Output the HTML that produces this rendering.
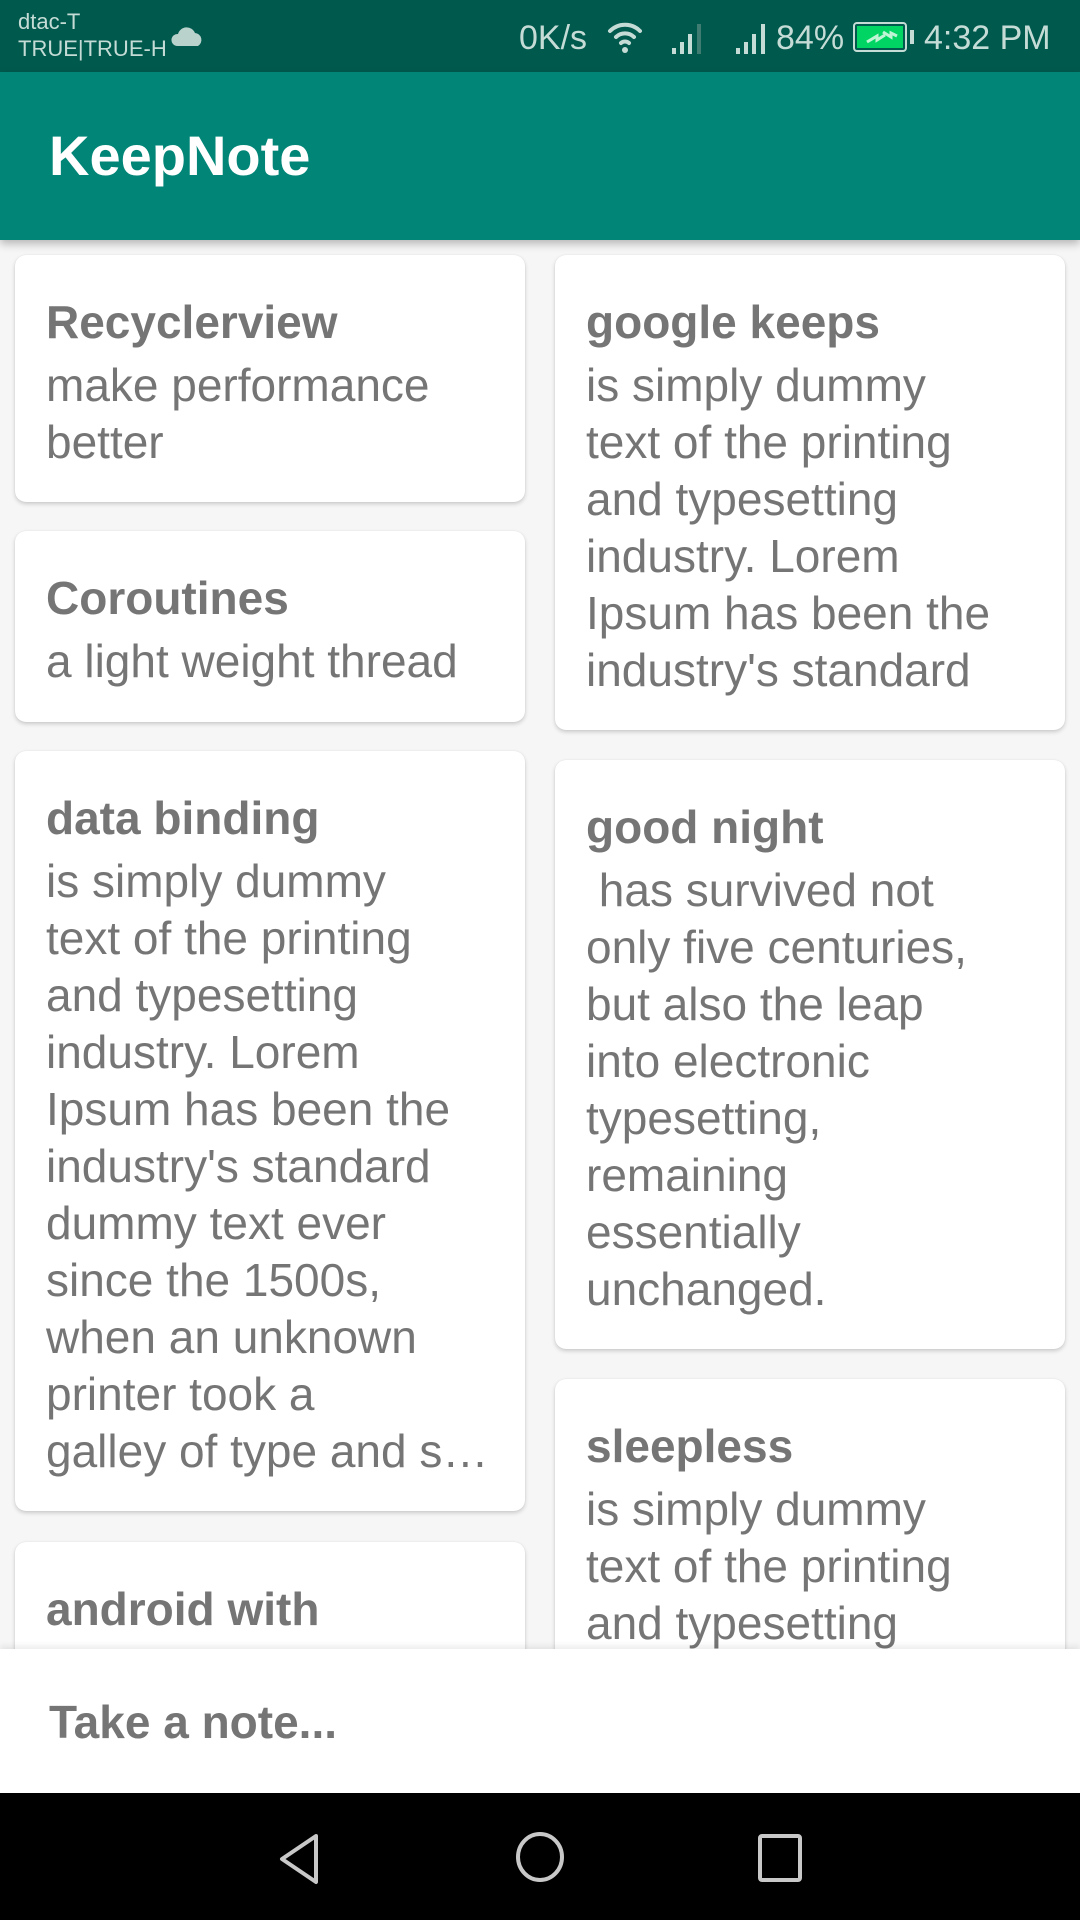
<!DOCTYPE html>
<html><head><meta charset="utf-8"><style>
*{margin:0;padding:0;box-sizing:border-box}
body{width:1080px;height:1920px;overflow:hidden;background:#f6f6f6;font-family:"Liberation Sans",sans-serif;position:relative}
.sb{position:absolute;left:0;top:0;width:1080px;height:72px;background:#00594d;color:#c5dcd6}
.ab{position:absolute;left:0;top:72px;width:1080px;height:168px;background:#008577;box-shadow:0 4px 8px rgba(0,0,0,.25);z-index:2}
.ab span{position:absolute;left:49px;top:54px;font-size:56px;font-weight:bold;color:#fff;line-height:60px}
.card{position:absolute;background:#fff;border-radius:11px;box-shadow:0 2px 4px rgba(0,0,0,.18),0 0 1px rgba(0,0,0,.1);padding:37px 0 0 31px;color:#757575;overflow:hidden;white-space:nowrap}
.t{font-size:46px;font-weight:bold;line-height:60px}
.b{font-size:46px;line-height:57px;margin-top:5px}
.bot{position:absolute;left:0;top:1649px;width:1080px;height:144px;background:#fff;box-shadow:0 -3px 6px rgba(0,0,0,.08);z-index:3}
.bot span{position:absolute;left:49px;top:46px;font-size:46px;font-weight:bold;color:#757575;line-height:54px}
.nav{position:absolute;left:0;top:1793px;width:1080px;height:127px;background:#000;z-index:3}
</style></head><body>
<div class="sb">
<div style="position:absolute;left:18px;top:8px;font-size:22px;line-height:27px">dtac-T<br>TRUE|TRUE-H</div>
<svg style="position:absolute;left:171px;top:26px" width="34" height="20" viewBox="0 0 34 20"><path d="M6 20a6 6 0 0 1 1-12 9 9 0 0 1 17-1 7 7 0 0 1 3 13z" fill="#b9d2cc"/></svg>
<div style="position:absolute;left:519px;top:16px;font-size:34px;line-height:44px">0K/s</div>
<svg style="position:absolute;left:607px;top:20px" width="36" height="34" viewBox="0 0 36 34"><g fill="none" stroke="#c5dcd6" stroke-width="4" stroke-linecap="round"><path d="M3 11a21 21 0 0 1 30 0"/><path d="M9 17a13 13 0 0 1 18 0"/><path d="M14 23a6 6 0 0 1 8 0"/></g><circle cx="18" cy="30" r="3" fill="#c5dcd6"/></svg>
<svg style="position:absolute;left:672px;top:20px" width="36" height="34" viewBox="0 0 36 34"><g fill="#c5dcd6"><rect x="0" y="28" width="4" height="6"/><rect x="8" y="22" width="4" height="12"/><rect x="16" y="14" width="4" height="20"/></g><rect x="25" y="4" width="4" height="30" fill="#3f7d72"/></svg>
<svg style="position:absolute;left:736px;top:20px" width="36" height="34" viewBox="0 0 36 34"><g fill="#c5dcd6"><rect x="0" y="28" width="4" height="6"/><rect x="8" y="22" width="4" height="12"/><rect x="16" y="14" width="4" height="20"/><rect x="25" y="4" width="4" height="30"/></g></svg>
<div style="position:absolute;left:776px;top:16px;font-size:34px;line-height:44px">84%</div>
<svg style="position:absolute;left:853px;top:22px" width="62" height="30" viewBox="0 0 62 30"><rect x="1" y="1" width="52" height="28" rx="3" fill="none" stroke="#c5dcd6" stroke-width="2"/><rect x="4" y="4" width="46" height="22" fill="#00d563"/><rect x="57" y="8" width="4" height="14" fill="#c5dcd6"/><path d="M14 20l10-6 0 4 8-5M30 10l8 5 0-4 6 3" stroke="#bff5d5" stroke-width="3" fill="none"/></svg>
<div style="position:absolute;left:924px;top:16px;font-size:34px;line-height:44px">4:32 PM</div>
</div>
<div class="ab"><span>KeepNote</span></div>

<div class="card" style="left:15px;top:255px;width:510px;height:247px"><div class="t">Recyclerview</div><div class="b">make performance<br>better</div></div>
<div class="card" style="left:15px;top:531px;width:510px;height:191px"><div class="t">Coroutines</div><div class="b">a light weight thread</div></div>
<div class="card" style="left:15px;top:751px;width:510px;height:760px"><div class="t">data binding</div><div class="b">is simply dummy<br>text of the printing<br>and typesetting<br>industry. Lorem<br>Ipsum has been the<br>industry's standard<br>dummy text ever<br>since the 1500s,<br>when an unknown<br>printer took a<br>galley of type and s…</div></div>
<div class="card" style="left:15px;top:1542px;width:510px;height:300px"><div class="t">android with<br>viewModel</div></div>

<div class="card" style="left:555px;top:255px;width:510px;height:475px"><div class="t">google keeps</div><div class="b">is simply dummy<br>text of the printing<br>and typesetting<br>industry. Lorem<br>Ipsum has been the<br>industry's standard</div></div>
<div class="card" style="left:555px;top:760px;width:510px;height:589px"><div class="t">good night</div><div class="b">&nbsp;has survived not<br>only five centuries,<br>but also the leap<br>into electronic<br>typesetting,<br>remaining<br>essentially<br>unchanged.</div></div>
<div class="card" style="left:555px;top:1379px;width:510px;height:400px"><div class="t">sleepless</div><div class="b">is simply dummy<br>text of the printing<br>and typesetting<br>industry.</div></div>

<div class="bot"><span>Take a note...</span></div>
<div class="nav">
<svg style="position:absolute;left:276px;top:40px" width="48" height="52" viewBox="0 0 48 52"><path d="M40 3L6 26l34 23z" fill="none" stroke="#c8c8c8" stroke-width="4" stroke-linejoin="round"/></svg>
<svg style="position:absolute;left:514px;top:37px" width="52" height="54" viewBox="0 0 52 54"><ellipse cx="26" cy="27" rx="22" ry="23" fill="none" stroke="#c8c8c8" stroke-width="4"/></svg>
<svg style="position:absolute;left:757px;top:40px" width="46" height="50" viewBox="0 0 46 50"><rect x="3" y="3" width="40" height="44" rx="2" fill="none" stroke="#c8c8c8" stroke-width="4"/></svg>
</div>
</body></html>
